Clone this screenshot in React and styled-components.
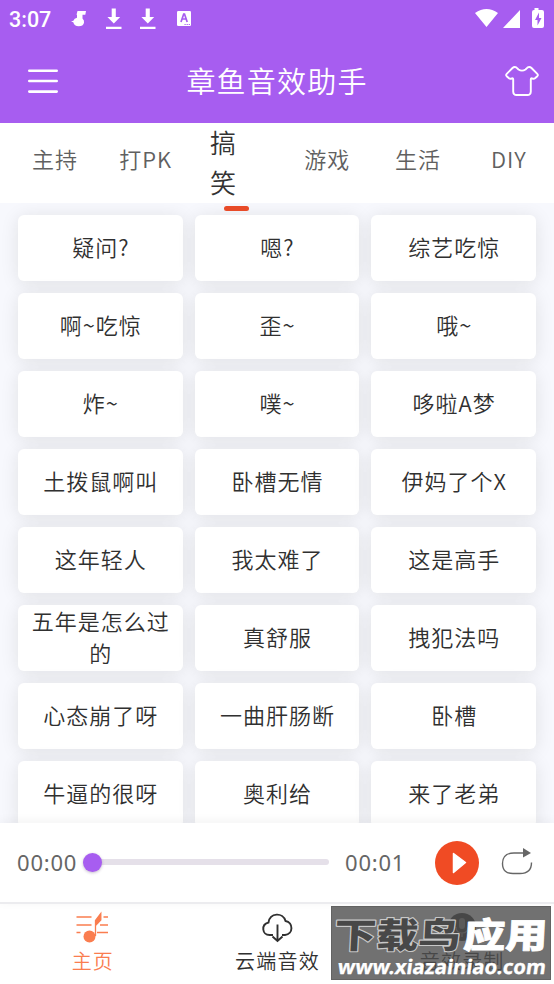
import React from "react";
import styled, { createGlobalStyle, css } from "styled-components";

const Global = createGlobalStyle`
  * { box-sizing: border-box; }
  body { margin: 0; background: #fff; font-family: "Noto Sans CJK SC", sans-serif; font-weight: 350; color: #333; }
`;
const Screen = styled.div`
  width: 554px; height: 984px; display: flex; flex-direction: column; overflow: hidden; background: #fff;
`;
const Header = styled.header`
  height: 123px; flex: none; background: #a75df0; color: #fff;
`;
const StatusBar = styled.div`
  height: 38px; padding: 0 9px 0 9px; display: flex; justify-content: space-between;
  svg { display: block; fill: #fff; }
`;
const Clock = styled.span`
  width: 43px; font: 500 21.5px/39px Roboto, sans-serif; letter-spacing: 0; white-space: nowrap;
`;
const StatusGroup = styled.div` display: flex; `;
const TitleBar = styled.div`
  height: 85px; padding: 0 14px 0 27px; display: grid; grid-template-columns: 36px 1fr 36px; align-items: center;
`;
const Title = styled.h1`
  margin: 0 13px 0 0; padding: 0 0 1px; text-align: center; font-size: 29px; line-height: 40px; font-weight: 350; letter-spacing: 1.2px;
`;
const Tabs = styled.nav`
  position: relative; z-index: 1; height: 80px; flex: none; padding: 0 0 0 9px; display: grid; grid-template-columns: repeat(6, 90.8px); background: #fff;
`;
const Tab = styled.div`
  position: relative; height: 80px; display: flex; align-items: center; justify-content: center;
  font-size: 22px; line-height: 30px; letter-spacing: 1px; color: #606060; padding: 0 0 10px 1px;
  ${p => p.$active && css`
    color: #333; font-size: 26px; line-height: 40px; padding: 0 43px 3px 18px;
    &::after { content: ""; position: absolute; left: 33px; top: 83px; width: 25px; height: 5px; border-radius: 3px; background: #e84b28; }
  `}
`;
const TabLabel = styled.span`
  ${p => p.$active && css` width: 27px; word-break: break-all; `}
`;
const Board = styled.main`
  height: 620px; flex: none; overflow: hidden; padding: 12px 18px 0; background: #f7f8fd;
  display: grid; grid-template-columns: repeat(3, 1fr); grid-auto-rows: 66px; gap: 12px;
`;
const Card = styled.div`
  display: flex; align-items: center; justify-content: center; text-align: center; padding: 0 10.5px 4px 11.5px;
  font-size: 22px; line-height: 32px; letter-spacing: 1px; color: #303030;
  background: #fff; border-radius: 6px; position: relative;
  box-shadow: 0 2px 18px rgba(30, 30, 20, .1);
`;
const CardText = styled.span` position: relative; z-index: 1; `;
const Player = styled.section`
  height: 81px; flex: none; position: relative; z-index: 2; display: flex; align-items: center; padding: 0 20px 1px 17px; background: #fff; border-bottom: 2px solid #ececef;
  box-shadow: 0 -2px 10px rgba(0,0,0,.05);
`;
const Time = styled.span`
  width: 60px; font-family: "Noto Sans", sans-serif; font-size: 22px; line-height: 30px; font-weight: 400; color: #666; letter-spacing: .8px; white-space: nowrap;
`;
const Track = styled.div`
  width: 246px; height: 6px; margin: 0 16px 0 6px; display: flex; align-items: center; background: #e5e0e9; border-radius: 3px;
`;
const Thumb = styled.div`
  width: 19px; height: 19px; border-radius: 50%; background: #a75df0; box-shadow: 0 1px 3px rgba(60,30,90,.3);
`;
const PlayButton = styled.div`
  width: 44px; height: 44px; margin: 2px 0 0 30px; border-radius: 50%; background: #f04b24; display: flex;
  svg { display: block; }
`;
const Repeat = styled.div`
  margin-left: 21px; height: 30px;
  svg { display: block; }
`;
const BottomNav = styled.nav`
  position: relative; height: 80px; flex: none; display: grid; grid-template-columns: repeat(3, 1fr);
`;
const NavItem = styled.div`
  display: flex; flex-direction: column; align-items: center; color: ${p => (p.$active ? "#fa7d4f" : "#303030")};
  padding-top: 6px;
  svg { display: block; }
`;
const NavLabel = styled.span` margin-top: 2px; padding-left: 1px; font-size: 20px; line-height: 30px; letter-spacing: 1.2px; `;
const Watermark = styled.div`
  position: absolute; left: 331px; top: 2px; width: 220px; height: 74px; overflow: hidden;
  background: rgba(78, 78, 78, .8); border: 1px solid rgba(90,90,90,.6);
  svg { display: block; }
`;

const Download = () => (
  <svg width="34" height="38" viewBox="0 0 34 38">
    <path d="M15.700 8.500h4.100V17h4.400l-6.400 6.500-6.400-6.500h4.300zM10 26.800h15.500v2.200H10z" />
  </svg>
);
const ShirtIcon = () => (
  <svg width="36" height="36" viewBox="0 0 36 36" fill="none" stroke="#fff" strokeWidth="1.9" strokeLinejoin="round">
    <path d="M8.500 5Q10.500 3 12.500 4.600L14.500 6.500Q18 8.800 21.500 6.500L23.500 4.600Q25.500 3 27.500 5L33.300 10.800Q34.500 12 33.300 13.200L31 15.300Q29.800 16.200 28 15.300 26.800 14.800 26.800 16.500V28.500Q26.800 32 23.300 32H12.700Q9.200 32 9.200 28.500V16.500Q9.200 14.800 8 15.300 6.200 16.200 5 15.300L2.700 13.200Q1.500 12 2.700 10.800Z" />
  </svg>
);

const tabs = ["主持", "打PK", "搞笑", "游戏", "生活", "DIY"];
const sounds = [
  "疑问?", "嗯?", "综艺吃惊",
  "啊~吃惊", "歪~", "哦~",
  "炸~", "噗~", "哆啦A梦",
  "土拨鼠啊叫", "卧槽无情", "伊妈了个X",
  "这年轻人", "我太难了", "这是高手",
  "五年是怎么过的", "真舒服", "拽犯法吗",
  "心态崩了呀", "一曲肝肠断", "卧槽",
  "牛逼的很呀", "奥利给", "来了老弟",
];

export default function App() {
  return (
    <Screen>
      <Global />
      <Header>
        <StatusBar>
          <StatusGroup>
            <Clock>3:07</Clock>
            <svg width="44" height="38" viewBox="0 0 44 38">
              <path d="M25.500 11H34l-.7 3.800h-2.800v3.700q2 1.700 1.500 4.300-.8 3.500-5.300 3.500-4.500 0-5.400-4l-2.300-.8 2.400-.8q.8-2.500 3.600-3V14.800h-.5z" />
            </svg>
            <Download />
            <Download />
            <svg width="38" height="38" viewBox="0 0 38 38">
              <rect x="13" y="11" width="14" height="15" rx="1.300" />
              <path d="m17 22 2.700-8h.8l2.700 8m-5.200-3h4.200" fill="none" stroke="#a75df0" strokeWidth="1.700" />
              <path d="M20.500 24.500h1.200m.9 0h1.200m.9 0h1.200" stroke="#a75df0" />
            </svg>
          </StatusGroup>
          <svg width="72" height="38" viewBox="473 0 72 38">
            <path d="M475 13q11.500-8 23 0L486.500 27zM520 10v18h-17zM532 10h2.500V8h4v2h3.500q2 0 2 2v14q0 2-2 2h-8q-2 0-2-2V12q0-2 2-2z" />
            <path d="M539 12.500 535 20h2.500v5.500l4-7.500H539z" fill="#a75df0" />
          </svg>
        </StatusBar>
        <TitleBar>
          <svg width="36" height="36" viewBox="0 0 36 36" stroke="#fff" strokeWidth="2.600" strokeLinecap="round">
            <path d="M2.300 7.700h27.400M2.300 18h27.400M2.300 28.600h27.400" />
          </svg>
          <Title>章鱼音效助手</Title>
          <ShirtIcon />
        </TitleBar>
      </Header>
      <Tabs>
        {tabs.map((t, i) => (
          <Tab key={t} $active={i === 2}><TabLabel $active={i === 2}>{t}</TabLabel></Tab>
        ))}
      </Tabs>
      <Board>
        {sounds.map(s => <Card key={s}><CardText>{s}</CardText></Card>)}
      </Board>
      <Player>
        <Time>00:00</Time>
        <Track><Thumb /></Track>
        <Time>00:01</Time>
        <PlayButton>
          <svg width="44" height="44" viewBox="0 0 44 44">
            <path d="M18.500 12.500 30.500 21.500 18.500 31.500z" fill="#fff" stroke="#fff" strokeWidth="1.500" strokeLinejoin="round" />
          </svg>
        </PlayButton>
        <Repeat>
          <svg width="34" height="30" viewBox="0 0 34 30">
            <path d="M24 6H14Q2.500 6 2.500 16.500T14 26.500h6Q31.500 26.500 31.500 15.500" fill="none" stroke="#666" strokeWidth="1.400" />
            <path d="M23 1 31 6l-8 4.500z" fill="#666" />
          </svg>
        </Repeat>
      </Player>
      <BottomNav>
        <NavItem $active>
          <svg width="34" height="34" viewBox="0 0 34 34">
            <path d="M1.500 7h15M28.500 7H33M1.500 15h15M25 15h8M1.500 22.500h4M22 22.500h11" stroke="currentColor" strokeWidth="1.400" />
            <circle cx="14.500" cy="26.500" r="6" fill="currentColor" />
            <path d="M20.500 26V10.500l5.300-7V10l-5.300 5.500" fill="currentColor" stroke="currentColor" strokeWidth="1.300" />
          </svg>
          <NavLabel>主页</NavLabel>
        </NavItem>
        <NavItem>
          <svg width="34" height="34" viewBox="0 0 34 34" fill="none" stroke="currentColor" strokeWidth="1.900">
            <path d="M13 25H9.500C2 25 .8 14.500 8.500 12.500 10 2.500 23 2 25.500 11c8 1.500 8 13-.5 14h-3M17.500 14.500V31M12.500 26.500l5 4.500 5-4.500" />
          </svg>
          <NavLabel>云端音效</NavLabel>
        </NavItem>
        <NavItem>
          <svg width="34" height="34" viewBox="0 0 34 34">
            <circle cx="17" cy="17" r="14" fill="currentColor" />
            <rect x="14" y="8" width="6" height="11" rx="3" fill="#fff" opacity=".45" />
            <path d="M11 17q0 6 6 6t6-6M17 23v4" fill="none" stroke="#fff" strokeWidth="1.200" opacity=".45" />
          </svg>
          <NavLabel>音效录制</NavLabel>
        </NavItem>
        <Watermark>
          <svg width="218" height="72" viewBox="0 0 218 72" strokeLinejoin="round" paintOrder="stroke">
            <g fontFamily="Noto Sans CJK SC, sans-serif" fontWeight="900" fontSize="35" transform="translate(4 0) skewX(-3)">
              <text x="0" y="41" fill="#484848" stroke="#c8c8c8" strokeWidth="2.200" textLength="126" lengthAdjust="spacingAndGlyphs">下载鸟</text>
              <text x="129" y="41" fill="#fff" stroke="#fff" strokeWidth=".8" textLength="84" lengthAdjust="spacingAndGlyphs">应用</text>
            </g>
            <text transform="translate(5 67) skewX(-8)" fontFamily="Noto Sans, sans-serif" fontWeight="700" fontSize="20" fill="#fff" stroke="#fff" strokeWidth=".3" textLength="208" lengthAdjust="spacingAndGlyphs">www.xiazainiao.com</text>
          </svg>
        </Watermark>
      </BottomNav>
    </Screen>
  );
}
